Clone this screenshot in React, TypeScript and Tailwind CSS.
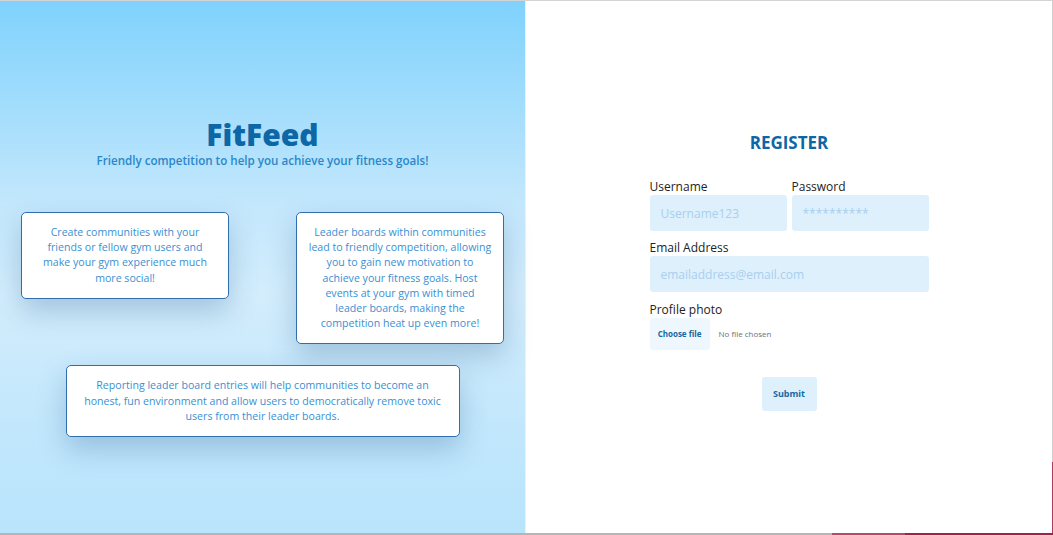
const font = "font-['Open_Sans',sans-serif]"

const cardClass =
  "rounded-[5px] border border-[#2f6fae] bg-white px-2 py-3 text-center text-[10.6px] leading-[15.2px] whitespace-nowrap text-[#3a8fd3] shadow-[0_12px_28px_rgba(40,90,140,0.28)]"

function Field({ label, placeholder, className }: { label: string; placeholder: string; className: string }) {
  return (
    <label className={`flex flex-col ${className}`}>
      <span className="text-[12px] leading-4 text-[#222]">{label}</span>
      <input
        placeholder={placeholder}
        className="h-9 rounded-[3px] bg-[#dff0fd] px-[11px] text-[12px] text-[#1c4f7a] outline-none placeholder:text-[#a7cfee]"
      />
    </label>
  )
}

export default function App() {
  return (
    <div className={`flex h-[535px] w-[1053px] flex-col bg-white ${font}`}>
      <div className="h-px bg-[#d4d4d4]" />
      <div className="flex flex-1">
        {/* left: intro */}
        <div className="flex w-[526px] flex-col items-center border-r border-[#e3f4fe] bg-[linear-gradient(180deg,#7fd2fd_0%,#c3e7fc_38%,#d3edfc_55%,#c2e7fc_80%,#b8e4fc_100%)] pt-[116px]">
          <h1 className="text-[30px] font-extrabold leading-9 text-[#0d67a6]">FitFeed</h1>
          <p className="text-[11.6px] font-semibold leading-4 text-[#2a87c9]">
            Friendly competition to help you achieve your fitness goals!
          </p>
          <div className="mt-[43px] flex w-full items-start justify-between px-[21px]">
            <div className={`w-[208px] ${cardClass}`}>
              Create communities with your
              <br />
              friends or fellow gym users and
              <br />
              make your gym experience much
              <br />
              more social!
            </div>
            <div className={`w-[208px] ${cardClass}`}>
              Leader boards within communities
              <br />
              lead to friendly competition, allowing
              <br />
              you to gain new motivation to
              <br />
              achieve your fitness goals. Host
              <br />
              events at your gym with timed
              <br />
              leader boards, making the
              <br />
              competition heat up even more!
            </div>
          </div>
          <div className={`mt-[21px] w-[394px] ${cardClass}`}>
            Reporting leader board entries will help communities to become an
            <br />
            honest, fun environment and allow users to democratically remove toxic
            <br />
            users from their leader boards.
          </div>
        </div>

        {/* right: register form */}
        <div className="flex flex-1 flex-col items-center pt-[132px]">
          <h2 className="text-[17px] font-bold leading-5 text-[#0d67a6]">REGISTER</h2>
          <div className="mt-[26px] flex w-[279px] flex-col">
            <div className="flex gap-[5px]">
              <Field label="Username" placeholder="Username123" className="w-[137px]" />
              <Field label="Password" placeholder="**********" className="w-[137px]" />
            </div>
            <Field label="Email Address" placeholder="emailaddress@email.com" className="mt-[9px]" />
            <span className="mt-[10px] text-[12px] leading-4 text-[#222]">Profile photo</span>
            <div className="flex items-center gap-[9px]">
              <button className="h-8 w-[60px] rounded-[3px] bg-[#eef7fe] text-[8px] font-bold text-[#1767a3]">
                Choose file
              </button>
              <span className="text-[8px] text-[#6b7280]">No file chosen</span>
            </div>
          </div>
          <button className="mt-[27px] h-[34px] w-[55px] rounded-[3px] bg-[#dff0fd] text-[9px] font-bold text-[#1767a3]">
            Submit
          </button>
        </div>

        <div className="flex w-px flex-col">
          <div className="h-[461px] bg-[#cfcfcf]" />
          <div className="flex-1 bg-[#b03a64]" />
        </div>
      </div>
      <div className="flex h-[2px]">
        <div className="w-[832px] bg-[#b5b5b5]" />
        <div className="w-[73px] bg-[#b8476f]" />
        <div className="flex-1 bg-[#a0204e]" />
      </div>
    </div>
  )
}
